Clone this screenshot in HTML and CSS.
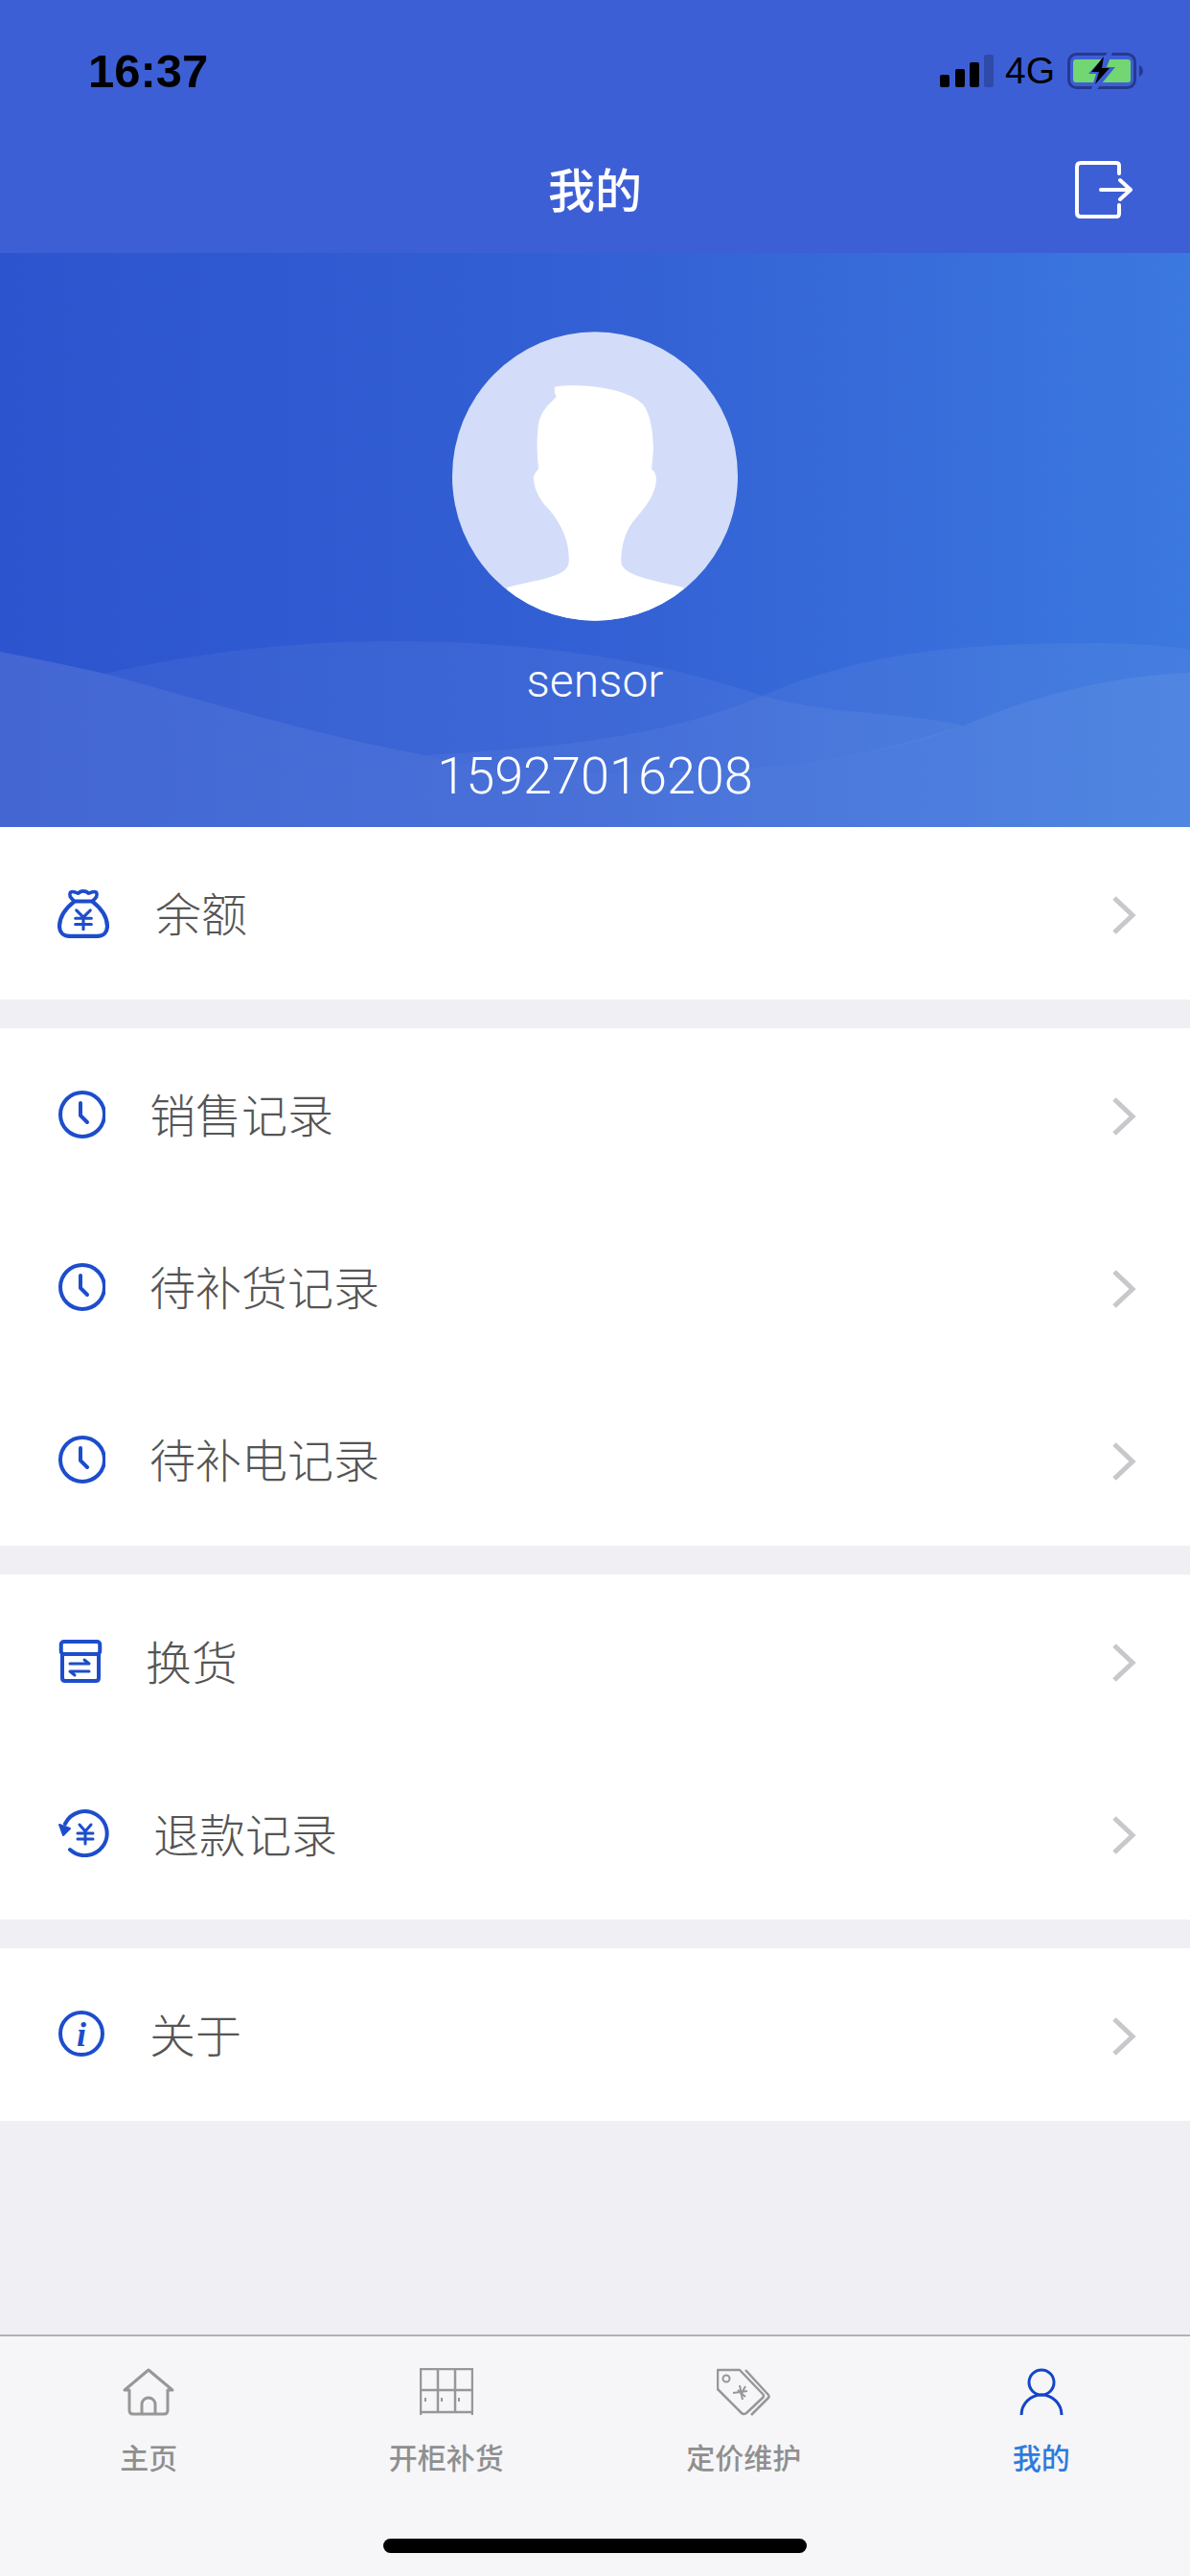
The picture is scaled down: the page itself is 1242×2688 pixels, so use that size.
FILE: index.html
```html
<!DOCTYPE html>
<html lang="zh-CN">
<head>
    <meta charset="UTF-8">
    <meta name="viewport" content="width=device-width, initial-scale=1.0">
    <title>我的</title>
    <link rel="stylesheet" href="styles.css">
</head>
<body>
    <div class="page">
        <div class="status-bar">
            <span class="time">16:37</span>
            <div class="status-right">
                <svg class="signal" width="56" height="34" viewBox="0 0 56 34">
                    <rect x="0" y="21" width="10" height="13" rx="2" fill="#000"/>
                    <rect x="16" y="15" width="10" height="19" rx="2" fill="#000"/>
                    <rect x="31" y="8" width="10" height="26" rx="2" fill="#000"/>
                    <rect x="46" y="0" width="10" height="34" rx="2" fill="#2f4aa8"/>
                </svg>
                <span class="network">4G</span>
                <svg class="battery" width="80" height="38" viewBox="0 0 80 38">
                    <rect x="1.5" y="1.5" width="69" height="35" rx="8" fill="none" stroke="#26398f" stroke-width="3"/>
                    <rect x="6" y="7" width="60" height="24" rx="3" fill="#72d672"/>
                    <path d="M75 13 Q79 15 79 19 Q79 23 75 25 Z" fill="#26398f"/>
                    <path d="M42 0 L22 22 H30 L25 38 H31 L50 15 H41 L47 0 Z" fill="#3d5fd6"/>
                    <path d="M38 4 L25 20 H33 L29 33 L44 16 H36 Z" fill="#000"/>
                </svg>
            </div>
        </div>

        <div class="nav-bar">
            <span></span>
            <h1 class="nav-title">我的</h1>
            <div class="nav-action">
                <svg width="60" height="60" viewBox="0 0 60 60" fill="none" stroke="#fff" stroke-width="4" stroke-linecap="round" stroke-linejoin="round">
                    <path d="M46 13 V5 Q46 2 43 2 H6 Q2 2 2 6 V54 Q2 58 6 58 H43 Q46 58 46 55 V46"/>
                    <path d="M27 30 H58 M47 20 L58 30 L47 40"/>
                </svg>
            </div>
        </div>

        <div class="hero">
            <svg class="hero-waves" width="1242" height="600" viewBox="0 264 1242 600">
                <path d="M110 703 C210 680 310 669 412 669 C560 669 690 690 796 726 C866 746 936 742 1006 757 C960 775 880 795 792 800 C680 806 560 815 444 788 C320 765 210 730 110 703 Z" fill="#fff" fill-opacity="0.05"/>
                <path d="M444 788 C580 780 690 770 796 726 C900 680 1010 671 1133 671 C1180 671 1215 673 1242 678 V702 C1160 705 1080 725 1006 757 C950 775 880 795 792 800 C680 806 560 815 444 788 Z" fill="#fff" fill-opacity="0.05"/>
                <path d="M0 680 C40 688 75 695 110 703 C210 730 320 765 444 788 C560 815 680 806 792 800 C880 795 950 775 1006 757 C1080 725 1160 705 1242 702 V864 H0 Z" fill="#fff" fill-opacity="0.11"/>
            </svg>
            <svg class="avatar" width="298" height="302" viewBox="212 78 896 906">
                <defs>
                    <clipPath id="avatar-clip"><ellipse cx="660" cy="531" rx="448" ry="453"/></clipPath>
                </defs>
                <ellipse cx="660" cy="531" rx="448" ry="453" fill="#d3ddf9"/>
                <path clip-path="url(#avatar-clip)" fill="#fff" d="M535 250 C600 238 760 250 810 305 C835 335 843 400 843 440 C843 470 838 490 838 510 C848 515 853 530 852 545 C848 590 820 625 790 660 C755 700 742 745 742 800 C745 840 830 855 938 880 L960 1000 H360 L385 880 C470 855 575 850 578 800 C580 740 560 690 520 640 C490 610 470 580 467 535 C470 520 480 515 483 505 C478 470 476 420 482 370 C488 330 510 310 538 282 C535 270 530 260 535 250 Z"/>
            </svg>
            <div class="user-name">sensor</div>
            <div class="user-phone">15927016208</div>
        </div>

        <div class="menu-group">
            <div class="menu-row row-balance">
                <svg class="menu-icon" width="54" height="52" viewBox="-1 0 50 50" fill="none" stroke="#1d4dcb" stroke-width="4" stroke-linecap="round" stroke-linejoin="round">
                    <path d="M15 13 C6 20 0 28 0 38 C0 44 4 48 10 48 H38 C44 48 48 44 48 38 C48 28 42 20 33 13 Z"/>
                    <path d="M15 13 C12 10 9 8 11 4 C14 2 17 5 19 5 C21 2 27 2 29 5 C31 5 34 2 37 4 C39 8 36 10 33 13" stroke-width="3.5"/>
                    <path d="M17 22 L24 29 L31 22 M16 30 H32 M16 36 H32 M24 29 V41" stroke-width="3"/>
                </svg>
                <span class="menu-label">余额</span>
                <svg class="chevron" width="26" height="42" viewBox="0 0 26 42"><path d="M3 3 L22 21 L3 39" fill="none" stroke="#c7c7cc" stroke-width="5"/></svg>
            </div>
        </div>

        <div class="menu-group">
            <div class="menu-row">
                <svg class="menu-icon" width="50" height="50" viewBox="0 0 50 50" fill="none" stroke="#1d4dcb" stroke-width="4" stroke-linecap="round" stroke-linejoin="round">
                    <circle cx="26" cy="25" r="23"/><path d="M24 13 V26 L31 33"/>
                </svg>
                <span class="menu-label">销售记录</span>
                <svg class="chevron" width="26" height="42" viewBox="0 0 26 42"><path d="M3 3 L22 21 L3 39" fill="none" stroke="#c7c7cc" stroke-width="5"/></svg>
            </div>
            <div class="menu-row">
                <svg class="menu-icon" width="50" height="50" viewBox="0 0 50 50" fill="none" stroke="#1d4dcb" stroke-width="4" stroke-linecap="round" stroke-linejoin="round">
                    <circle cx="26" cy="25" r="23"/><path d="M24 13 V26 L31 33"/>
                </svg>
                <span class="menu-label">待补货记录</span>
                <svg class="chevron" width="26" height="42" viewBox="0 0 26 42"><path d="M3 3 L22 21 L3 39" fill="none" stroke="#c7c7cc" stroke-width="5"/></svg>
            </div>
            <div class="menu-row">
                <svg class="menu-icon" width="50" height="50" viewBox="0 0 50 50" fill="none" stroke="#1d4dcb" stroke-width="4" stroke-linecap="round" stroke-linejoin="round">
                    <circle cx="26" cy="25" r="23"/><path d="M24 13 V26 L31 33"/>
                </svg>
                <span class="menu-label">待补电记录</span>
                <svg class="chevron" width="26" height="42" viewBox="0 0 26 42"><path d="M3 3 L22 21 L3 39" fill="none" stroke="#c7c7cc" stroke-width="5"/></svg>
            </div>
        </div>

        <div class="menu-group">
            <div class="menu-row row-exchange">
                <svg class="menu-icon" width="50" height="46" viewBox="0 0 50 46" fill="none" stroke="#1d4dcb" stroke-width="4" stroke-linecap="round" stroke-linejoin="round">
                    <rect x="3.75" y="3" width="40.5" height="13" rx="3"/>
                    <path d="M5 16 V41 Q5 44 8 44 H40 Q43 44 43 41 V16"/>
                    <path d="M13 26 H33 L28 22 M33 34 H13 L18 38" stroke-width="3"/>
                </svg>
                <span class="menu-label">换货</span>
                <svg class="chevron" width="26" height="42" viewBox="0 0 26 42"><path d="M3 3 L22 21 L3 39" fill="none" stroke="#c7c7cc" stroke-width="5"/></svg>
            </div>
            <div class="menu-row row-refund">
                <svg class="menu-icon" width="56" height="50" viewBox="0 0 56 50" fill="none" stroke="#1d4dcb" stroke-width="4" stroke-linecap="round" stroke-linejoin="round">
                    <path d="M8 15 A23 23 0 1 1 13 42"/>
                    <path d="M2 16 L6 27 L13 20 Z" fill="#1d4dcb" stroke-width="2"/>
                    <path d="M23 16 L29 23 L35 16 M21 25 H37 M21 31 H37 M29 23 V36" stroke-width="3"/>
                </svg>
                <span class="menu-label">退款记录</span>
                <svg class="chevron" width="26" height="42" viewBox="0 0 26 42"><path d="M3 3 L22 21 L3 39" fill="none" stroke="#c7c7cc" stroke-width="5"/></svg>
            </div>
        </div>

        <div class="menu-group">
            <div class="menu-row">
                <svg class="menu-icon" width="50" height="50" viewBox="0 0 50 50" fill="none" stroke="#1d4dcb" stroke-width="4">
                    <circle cx="25" cy="24" r="22"/>
                    <text x="25" y="37" class="info-glyph">i</text>
                </svg>
                <span class="menu-label">关于</span>
                <svg class="chevron" width="26" height="42" viewBox="0 0 26 42"><path d="M3 3 L22 21 L3 39" fill="none" stroke="#c7c7cc" stroke-width="5"/></svg>
            </div>
        </div>

        <div class="spacer"></div>

        <div class="tab-bar">
            <div class="tab">
                <svg width="56" height="50" viewBox="0 0 54 50" fill="none" stroke="#979797" stroke-width="3" stroke-linejoin="round">
                    <path d="M2 23 L27 2 L52 23 H47 V44 Q47 48 43 48 H11 Q7 48 7 44 V23 Z"/>
                    <path d="M20 48 V38 A7 7 0 0 1 34 38 V48"/>
                </svg>
                <span class="tab-label">主页</span>
            </div>
            <div class="tab">
                <svg width="56" height="50" viewBox="0 0 56 50" fill="none" stroke="#979797" stroke-width="2.5">
                    <path d="M1 49 V1 H55 V49 M1 23 H55 M1 46 H55 M19 1 V46 M37 1 V46"/>
                    <path d="M6 31 V35 M23 31 V35 M41 31 V35" stroke-width="2"/>
                </svg>
                <span class="tab-label">开柜补货</span>
            </div>
            <div class="tab">
                <svg width="56" height="50" viewBox="0 0 56 50" fill="none" stroke="#979797" stroke-width="2.5" stroke-linejoin="round">
                    <path d="M1 2 H24 L48 27 Q50 29 48 31 L31 47 Q28 49 26 47 L1 22 Z"/>
                    <path d="M30 2 L54 28 Q55 30 54 31 L36 49"/>
                    <circle cx="10" cy="11" r="3.5" stroke-width="2"/>
                    <path d="M17 26 L32 24 M24 18 L27 33 M22 23 L30 30 M30 19 L25 28" stroke-width="2"/>
                </svg>
                <span class="tab-label">定价维护</span>
            </div>
            <div class="tab tab-active">
                <svg width="46" height="50" viewBox="0 0 46 50" fill="none" stroke="#1346c8" stroke-width="3">
                    <circle cx="23" cy="15" r="13"/>
                    <path d="M2 49 A21 21 0 0 1 44 49"/>
                </svg>
                <span class="tab-label">我的</span>
            </div>
            <div class="home-indicator"></div>
        </div>
    </div>
</body>
</html>
```

FILE: styles.css
```css
* {
    box-sizing: border-box;
}

body {
    margin: 0;
    font-family: "Liberation Sans", "Noto Sans CJK SC", sans-serif;
    background-color: #efeff4;
}

.page {
    display: flex;
    flex-direction: column;
    width: 1242px;
    height: 2688px;
    overflow: hidden;
}

.status-bar {
    display: flex;
    justify-content: space-between;
    align-items: center;
    height: 132px;
    padding: 16px 48px 0 92px;
    background: #3d5fd6;
    color: #000;
}

.time {
    font-size: 49px;
    font-weight: bold;
}

.status-right {
    display: flex;
    align-items: center;
}

.network {
    margin: 0 13px 0 12px;
    font-size: 39px;
}

.nav-bar {
    display: grid;
    grid-template-columns: 1fr auto 1fr;
    align-items: center;
    height: 132px;
    background: #3d5fd6;
}

.nav-title {
    margin: 0 0 6px;
    font-size: 49px;
    font-weight: 500;
    color: #fff;
}

.nav-action {
    display: flex;
    justify-content: flex-end;
    padding-right: 60px;
}

.hero {
    position: relative;
    display: flex;
    flex-direction: column;
    align-items: center;
    height: 599px;
    padding-top: 82px;
    background: linear-gradient(90deg, #2c54ce 0%, #3360d4 50%, #3b78df 100%);
    color: #fff;
    overflow: hidden;
}

.hero-waves {
    position: absolute;
    top: 0;
    left: 0;
}

.avatar {
    position: relative;
}

.user-name {
    position: relative;
    margin-top: 35px;
    font-family: Roboto, sans-serif;
    font-size: 48px;
    font-weight: 300;
    line-height: 56px;
}

.user-phone {
    position: relative;
    margin-top: 40px;
    font-family: Roboto, sans-serif;
    font-size: 54px;
    font-weight: 300;
    line-height: 62px;
}

.menu-group {
    margin-bottom: 30px;
    background: #fff;
}

.menu-group:last-of-type {
    margin-bottom: 0;
}

.menu-row {
    display: flex;
    align-items: center;
    height: 180px;
    padding: 0 56px 0 60px;
}

.menu-icon {
    flex: none;
}

.menu-label {
    flex: 1;
    margin-bottom: 4px;
    margin-left: 46px;
    font-family: "Noto Sans CJK SC", sans-serif;
    font-size: 48px;
    font-weight: 300;
    color: #555;
}

.row-balance .menu-label {
    margin-left: 48px;
}

.row-exchange .menu-label {
    margin-bottom: 2px;
    margin-left: 42px;
}

.row-refund .menu-label {
    margin-bottom: 2px;
    margin-left: 44px;
}

.chevron {
    margin-top: 4px;
}

.info-glyph {
    font-family: "Liberation Serif", serif;
    font-size: 36px;
    font-style: italic;
    font-weight: bold;
    text-anchor: middle;
    fill: #1d4dcb;
    stroke: none;
}

.spacer {
    flex: 1;
}

.tab-bar {
    position: relative;
    display: grid;
    grid-template-columns: repeat(4, 1fr);
    height: 252px;
    padding-top: 33px;
    background: #f6f6f8;
    border-top: 2px solid #b2b2b2;
}

.tab {
    display: flex;
    flex-direction: column;
    align-items: center;
}

.tab-label {
    margin-top: 21px;
    font-family: "Noto Sans CJK SC", sans-serif;
    font-size: 30px;
    font-weight: 500;
    line-height: 42px;
    color: #8f8f8f;
}

.tab-active .tab-label {
    color: #2d7bdc;
}

.home-indicator {
    position: absolute;
    bottom: 24px;
    left: 400px;
    width: 442px;
    height: 15px;
    border-radius: 8px;
    background: #000;
}
```
